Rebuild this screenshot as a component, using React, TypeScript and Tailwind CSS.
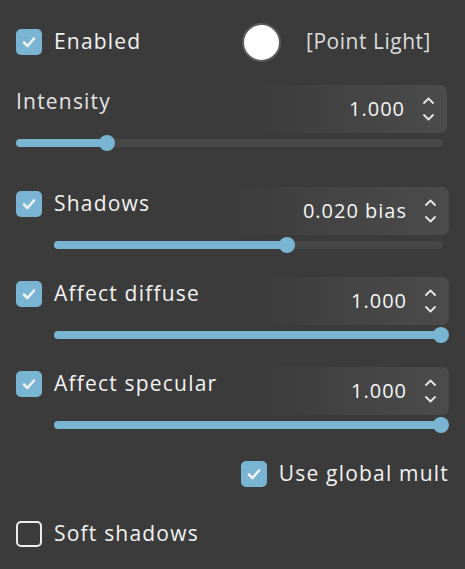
import React from 'react'

const FONT = { fontFamily: '"Open Sans", "Liberation Sans", sans-serif' }

function Check({ on }: { on: boolean }) {
  if (!on) {
    return <div className="w-[26px] h-[26px] rounded-[5px] border-2 border-[#ececec] shrink-0" />
  }
  return (
    <div className="w-[26px] h-[26px] rounded-[5px] bg-[#79b5d3] flex items-center justify-center shrink-0">
      <svg width="16" height="16" viewBox="0 0 16 16" fill="none">
        <path d="M3 8.5 L6.5 12 L13 4.5" stroke="#eef2f5" strokeWidth="2.6" strokeLinecap="round" strokeLinejoin="round" />
      </svg>
    </div>
  )
}

function Spinner({ value, width }: { value: string; width: string }) {
  return (
    <div className={`ml-auto h-12 ${width} rounded-[7px] bg-gradient-to-r from-[#3b3b3b] via-[#444444] to-[#4b4b4b] flex items-center justify-end pr-[13px]`}>
      <span className="text-[20px] tracking-[0.05em] text-[#f5f5f5] leading-none">{value}</span>
      <div className="ml-[18px] flex flex-col items-center gap-[10px]">
        <svg width="11" height="7" viewBox="0 0 11 7" fill="none">
          <path d="M1 6 L5.5 1.5 L10 6" stroke="#e6e6e6" strokeWidth="1.8" strokeLinecap="round" strokeLinejoin="round" />
        </svg>
        <svg width="11" height="7" viewBox="0 0 11 7" fill="none">
          <path d="M1 1 L5.5 5.5 L10 1" stroke="#e6e6e6" strokeWidth="1.8" strokeLinecap="round" strokeLinejoin="round" />
        </svg>
      </div>
    </div>
  )
}

function Slider({ pct, indent }: { pct: number; indent: boolean }) {
  return (
    <div className={`relative h-4 ${indent ? 'ml-[38px]' : ''} mr-[6px]`}>
      <div className="absolute left-0 right-0 top-1 h-2 rounded-full bg-[#474747]" />
      <div className="absolute left-0 top-1 h-2 rounded-full bg-[#79b5d3]" style={{ width: `${pct}%` }} />
      <div className="absolute top-0 w-4 h-4 rounded-full bg-[#79b5d3] -translate-x-1/2" style={{ left: `${pct}%` }} />
    </div>
  )
}

type Row = { label: string; check?: boolean; value: string; pct: number; box: string }

const ROWS: Row[] = [
  { label: 'Shadows', check: true, value: '0.020 bias', pct: 60, box: 'w-[220px]' },
  { label: 'Affect diffuse', check: true, value: '1.000', pct: 99.5, box: 'w-[190px]' },
  { label: 'Affect specular', check: true, value: '1.000', pct: 99.5, box: 'w-[190px]' },
]

export default function App() {
  return (
    <div className="w-[465px] h-[569px] bg-[#3b3b3b] text-[#f2f2f2] overflow-hidden px-4 tracking-[0.075em]" style={FONT}>
      {/* Enabled row */}
      <div className="flex items-center h-[38px] mt-[23px]">
        <Check on />
        <span className="ml-3 text-[21px]">Enabled</span>
        <div className="ml-auto w-[39px] h-[39px] rounded-full bg-white border-2 border-[#5c5c5c]" />
        <span className="ml-[25px] mr-[18px] text-[21px] tracking-[0.025em] text-[#dcdcdc]">[Point Light]</span>
      </div>

      {/* Intensity */}
      <div className="mt-[24px] flex items-start">
        <span className="mt-[1px] text-[21px] text-[#e4e4e4]">Intensity</span>
        <div className="ml-auto mr-[2px] flex">
          <Spinner value="1.000" width="w-[190px]" />
        </div>
      </div>
      <div className="mt-[2px]">
        <Slider pct={21.4} indent={false} />
      </div>

      {ROWS.map((r, i) => (
        <div key={r.label} className={i === 0 ? 'mt-[36px]' : 'mt-[24px]'}>
          <div className="flex items-start">
            <div className="flex items-center h-[26px] mt-1">
              <Check on={!!r.check} />
              <span className="ml-3 text-[21px]">{r.label}</span>
            </div>
            <Spinner value={r.value} width={r.box} />
          </div>
          <div className="mt-[2px]">
            <Slider pct={r.pct} indent />
          </div>
        </div>
      ))}

      {/* Use global mult */}
      <div className="mt-[28px] flex items-center justify-end h-[26px]">
        <Check on />
        <span className="ml-3 text-[21px]">Use global mult</span>
      </div>

      {/* Soft shadows */}
      <div className="mt-[34px] flex items-center h-[26px]">
        <Check on={false} />
        <span className="ml-3 text-[21px]">Soft shadows</span>
      </div>
    </div>
  )
}
